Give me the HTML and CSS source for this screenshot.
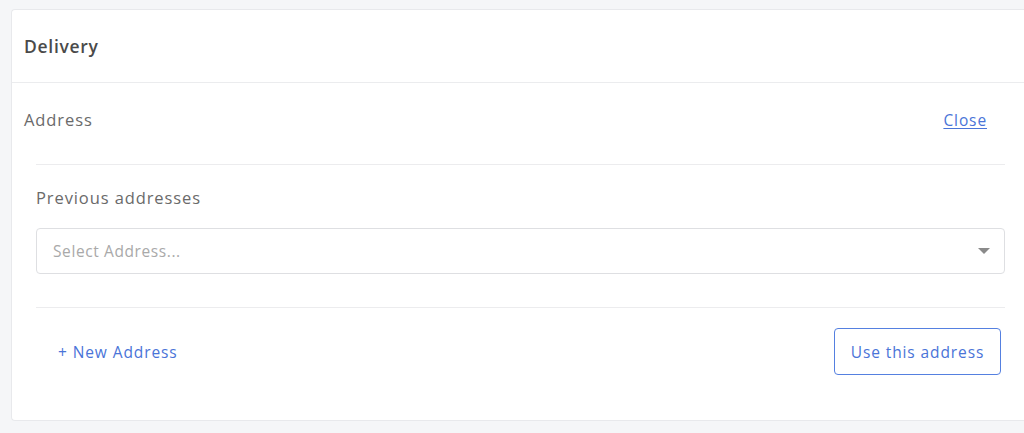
FILE: index.html
```html
<!DOCTYPE html>
<html lang="en">
<head>
<meta charset="utf-8">
<title>Delivery</title>
<link rel="stylesheet" href="styles.css">
</head>
<body>
<div class="card">
  <div class="card-header">Delivery</div>
  <div class="address-row">
    <span class="address-title">Address</span>
    <a class="close-link" href="#">Close</a>
  </div>
  <div class="address-body">
    <div class="section">
      <div class="field-label">Previous addresses</div>
      <div class="select">
        <span class="placeholder">Select Address...</span>
        <span class="caret"></span>
      </div>
    </div>
    <div class="footer">
      <a class="new-address" href="#">+ New Address</a>
      <button class="use-btn" type="button">Use this address</button>
    </div>
  </div>
</div>
</body>
</html>
```

FILE: styles.css
```css
* { box-sizing: border-box; }
html, body { margin: 0; padding: 0; }
body {
  background: #f5f6f8;
  font-family: "Open Sans", "Liberation Sans", sans-serif;
  letter-spacing: 0.9px;
  width: 1024px;
  height: 433px;
  overflow: hidden;
}
.card {
  margin: 9px 0 0 11px;
  height: 412px;
  background: #fff;
  border: 1px solid #e8e9ec;
  border-right: none;
  border-radius: 4px 0 0 4px;
}
.card-header {
  height: 73px;
  display: flex;
  align-items: center;
  padding-left: 12px;
  border-bottom: 1px solid #ebecee;
  font-size: 17.5px;
  font-weight: 600;
  letter-spacing: 0.7px;
  color: #4a4a4a;
}
.address-row {
  height: 73px;
  display: flex;
  align-items: center;
  justify-content: space-between;
  padding: 0 37px 0 12px;
}
.address-title {
  font-size: 16.5px;
  color: #6a6a6a;
}
.close-link {
  font-size: 15.5px;
  color: #4a74d8;
  text-decoration: underline;
  text-underline-offset: 2px;
}
.address-body {
  margin: 8px 19px 0 24px;
  border-top: 1px solid #ececee;
}
.section {
  padding-top: 21px;
  padding-bottom: 33px;
  border-bottom: 1px solid #ececee;
}
.field-label {
  font-size: 16.5px;
  line-height: 24px;
  color: #6a6a6a;
}
.select {
  margin-top: 18px;
  height: 46px;
  border: 1px solid #dedfe2;
  border-radius: 4px;
  display: flex;
  align-items: center;
  justify-content: space-between;
  padding: 0 14px 0 16px;
}
.placeholder {
  font-size: 15.5px;
  letter-spacing: 0.6px;
  color: #a9a9a9;
}
.caret {
  width: 0;
  height: 0;
  border-left: 6px solid transparent;
  border-right: 6px solid transparent;
  border-top: 6px solid #8a8a8a;
}
.footer {
  display: flex;
  align-items: center;
  justify-content: space-between;
  padding: 20px 4px 0 22px;
}
.new-address {
  font-size: 15.5px;
  color: #4a74d8;
  text-decoration: none;
}
.use-btn {
  width: 167px;
  height: 47px;
  background: #fff;
  border: 1.5px solid #5580e0;
  border-radius: 4px;
  font-family: inherit;
  letter-spacing: inherit;
  font-size: 15.5px;
  color: #4a74d8;
  padding: 0;
}
```
